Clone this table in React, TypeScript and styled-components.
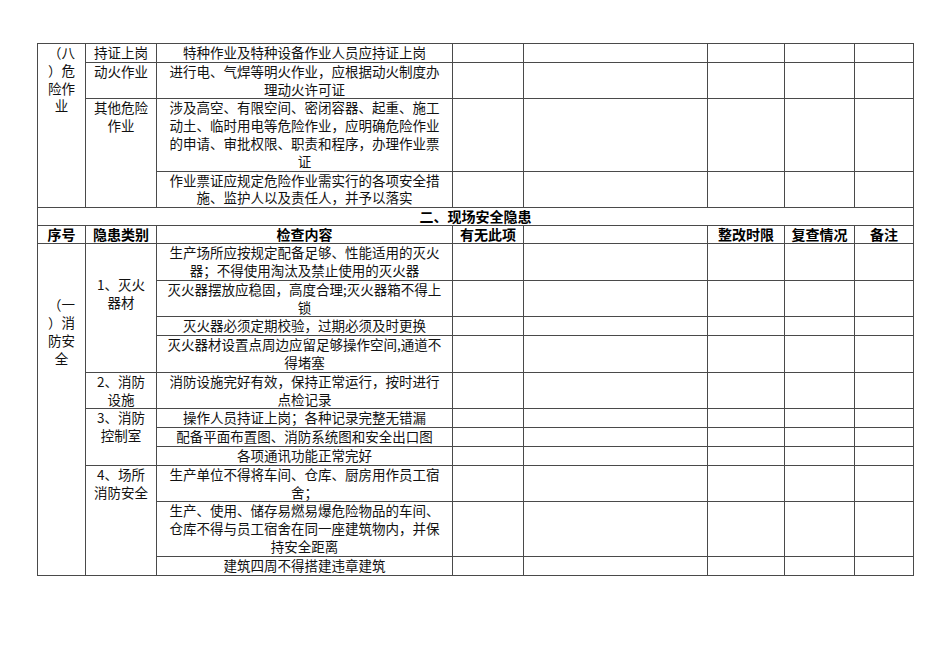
import React from 'react';
import styled, { createGlobalStyle } from 'styled-components';

const GlobalStyle = createGlobalStyle`
  html, body {
    margin: 0;
    padding: 0;
    background: #fff;
  }
  body {
    font-family: 'Noto Sans CJK SC', 'Liberation Serif', serif;
    color: #111;
  }
`;

type Item = {
  category?: string[];
  categoryPad?: number;
  categorySpan?: number;
  content: string;
};

type Section = {
  title: string[];
  titlePad: number;
  items: Item[];
};

const sectionEight: Section = {
  title: ['（八', '）危', '险作', '业'],
  titlePad: 0,
  items: [
    { category: ['持证上岗'], categorySpan: 1, content: '特种作业及特种设备作业人员应持证上岗' },
    { category: ['动火作业'], categorySpan: 1, content: '进行电、气焊等明火作业，应根据动火制度办理动火许可证' },
    {
      category: ['其他危险', '作业'],
      categorySpan: 2,
      content: '涉及高空、有限空间、密闭容器、起重、施工动土、临时用电等危险作业，应明确危险作业的申请、审批权限、职责和程序，办理作业票证',
    },
    { content: '作业票证应规定危险作业需实行的各项安全措施、监护人以及责任人，并予以落实' },
  ],
};

const sectionFire: Section = {
  title: ['（一', '）消', '防安', '全'],
  titlePad: 52,
  items: [
    {
      category: ['1、灭火', '器材'],
      categorySpan: 4,
      categoryPad: 32,
      content: '生产场所应按规定配备足够、性能适用的灭火器；不得使用淘汰及禁止使用的灭火器',
    },
    { content: '灭火器摆放应稳固，高度合理;灭火器箱不得上锁' },
    { content: '灭火器必须定期校验，过期必须及时更换' },
    { content: '灭火器材设置点周边应留足够操作空间,通道不得堵塞' },
    { category: ['2、消防', '设施'], categorySpan: 1, content: '消防设施完好有效，保持正常运行，按时进行点检记录' },
    { category: ['3、消防', '控制室'], categorySpan: 3, content: '操作人员持证上岗；各种记录完整无错漏' },
    { content: '配备平面布置图、消防系统图和安全出口图' },
    { content: '各项通讯功能正常完好' },
    { category: ['4、场所', '消防安全'], categorySpan: 3, content: '生产单位不得将车间、仓库、厨房用作员工宿舍；' },
    { content: '生产、使用、储存易燃易爆危险物品的车间、仓库不得与员工宿舍在同一座建筑物内，并保持安全距离' },
    { content: '建筑四周不得搭建违章建筑' },
  ],
};

const columns = [48, 71, 296, 71, 184, 77, 70, 59];
const headers = ['序号', '隐患类别', '检查内容', '有无此项', '', '整改时限', '复查情况', '备注'];

const Page = styled.div`
  padding: 43px 0 40px 37px;
`;

const Sheet = styled.table`
  border-collapse: collapse;
  table-layout: fixed;
  width: 877px;
  border: 1px solid #8a8a8a;
`;

const Cell = styled.td<{ $pad?: number; $wide?: boolean }>`
  border: 1px solid #4a4a4a;
  padding: ${(p) => p.$pad ?? 0}px ${(p) => (p.$wide ? 7 : 6)}px 0;
  font-size: 13.5px;
  line-height: 17.8px;
  text-align: center;
  vertical-align: top;
  word-break: break-all;
`;

const Line = styled.span`
  display: block;
`;

const HeadCell = styled.th`
  border: 1px solid #4a4a4a;
  padding: 0;
  height: 17px;
  font-family: 'Noto Sans CJK SC', 'Liberation Sans', sans-serif;
  font-weight: bold;
  font-size: 14px;
  line-height: 17px;
  text-align: center;
  color: #000;
`;

const EmptyCells = () => (
  <>
    {columns.slice(3).map((_, i) => (
      <Cell key={i} />
    ))}
  </>
);

const SectionRows = ({ section }: { section: Section }) => (
  <>
    {section.items.map((item, i) => (
      <tr key={i}>
        {i === 0 && (
          <Cell rowSpan={section.items.length} $pad={section.titlePad}>
            {section.title.map((t) => (
              <Line key={t}>{t}</Line>
            ))}
          </Cell>
        )}
        {item.category && (
          <Cell rowSpan={item.categorySpan} $pad={item.categoryPad}>
            {item.category.map((t) => (
              <Line key={t}>{t}</Line>
            ))}
          </Cell>
        )}
        <Cell $wide>{item.content}</Cell>
        <EmptyCells />
      </tr>
    ))}
  </>
);

export default function App() {
  return (
    <>
      <GlobalStyle />
      <Page>
        <Sheet>
          <colgroup>
            {columns.map((w, i) => (
              <col key={i} style={{ width: w }} />
            ))}
          </colgroup>
          <tbody>
            <SectionRows section={sectionEight} />
            <tr>
              <HeadCell colSpan={8}>二、现场安全隐患</HeadCell>
            </tr>
            <tr>
              {headers.map((h, i) => (
                <HeadCell key={i}>{h}</HeadCell>
              ))}
            </tr>
            <SectionRows section={sectionFire} />
          </tbody>
        </Sheet>
      </Page>
    </>
  );
}
